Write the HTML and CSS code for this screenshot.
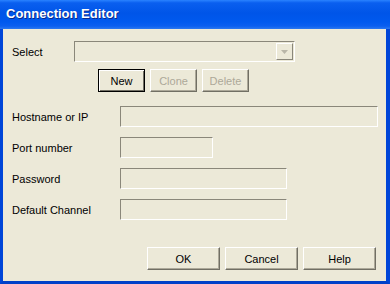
FILE: index.html
```html
<!DOCTYPE html>
<html lang="en">
<head>
  <meta charset="UTF-8" />
  <title>Connection Editor</title>
  <link rel="stylesheet" href="styles.css">
</head>
<body>
  <div class="window">
    <div class="titlebar">Connection Editor</div>
    <div class="content">
      <div class="select-row">
        <span class="select-label">Select</span>
        <div class="combo">
          <span class="combo-btn">
            <svg width="7" height="4" viewBox="0 0 7 4"><path d="M0 0h7L3.5 4z" fill="#b9b6a8"/></svg>
          </span>
        </div>
      </div>
      <div class="actions">
        <button class="btn btn-default">New</button>
        <button class="btn" disabled>Clone</button>
        <button class="btn" disabled>Delete</button>
      </div>

      <div class="field">
        <label>Hostname or IP</label>
        <div class="box w-host"></div>
      </div>
      <div class="field">
        <label>Port number</label>
        <div class="box w-port"></div>
      </div>
      <div class="field">
        <label>Password</label>
        <div class="box w-mid"></div>
      </div>
      <div class="field">
        <label>Default Channel</label>
        <div class="box w-mid"></div>
      </div>

      <div class="footer">
        <button class="btn btn-wide">OK</button>
        <button class="btn btn-wide">Cancel</button>
        <button class="btn btn-wide">Help</button>
      </div>
    </div>
  </div>
</body>
</html>
```

FILE: styles.css
```css
html, body { margin: 0; padding: 0; }
body {
  font-family: "Liberation Sans", Arial, sans-serif;
  font-size: 11px;
  color: #000;
  background: #0054e3;
}
.window {
  width: 390px;
  height: 284px;
  display: flex;
  flex-direction: column;
}
.titlebar {
  height: 29px;
  box-sizing: border-box;
  padding: 6px 0 0 6px;
  color: #fff;
  font-weight: bold;
  font-size: 13px;
  background: linear-gradient(#2a83ff 0, #0a5fef 10%, #0055e8 45%, #0059ee 75%, #0a5ff0 90%, #2b78f0 100%);
  text-shadow: 1px 1px 0 #0a2a8a;
}
.content {
  flex: 1;
  background: #ece9d8;
  border-left: 3px solid #0045d8;
  border-right: 4px solid #0045d8;
  border-bottom: 3px solid #0040c8;
  padding: 12px 0 0 9px;
}
.select-row {
  display: flex;
  align-items: center;
  height: 21px;
}
.select-label { width: 62px; }
.combo {
  width: 221px;
  height: 21px;
  box-sizing: border-box;
  border-top: 1px solid #8a877a;
  border-left: 1px solid #8a877a;
  border-right: 1px solid #fff;
  border-bottom: 1px solid #fff;
  display: flex;
  justify-content: flex-end;
  padding: 1px;
}
.combo-btn {
  width: 17px;
  box-sizing: border-box;
  border-top: 1px solid #fff;
  border-left: 1px solid #fff;
  border-right: 1px solid #8a877a;
  border-bottom: 1px solid #8a877a;
  display: flex;
  align-items: center;
  justify-content: center;
}
.actions {
  display: flex;
  gap: 5px;
  margin: 7px 0 0 86px;
}
.btn {
  font-family: "Liberation Sans", Arial, sans-serif;
  font-size: 11px;
  height: 23px;
  width: 47px;
  padding: 0;
  margin: 0;
  background: #ece9d8;
  color: #000;
  border-top: 1px solid #fff;
  border-left: 1px solid #fff;
  border-right: 1px solid #716f64;
  border-bottom: 1px solid #716f64;
  box-shadow: inset -1px -1px 0 #aca899;
}
.btn:disabled { color: #aca899; }
.btn-default {
  border: 1px solid #000;
  box-shadow: inset 1px 1px 0 #fff, inset -1px -1px 0 #716f64;
}
.field {
  display: flex;
  align-items: center;
  margin-top: 10px;
  height: 21px;
}
.actions + .field { margin-top: 14px; }
.field label { width: 108px; }
.box {
  height: 21px;
  box-sizing: border-box;
  border-top: 1px solid #8a877a;
  border-left: 1px solid #8a877a;
  border-right: 1px solid #fff;
  border-bottom: 1px solid #fff;
}
.w-host { width: 258px; }
.w-port { width: 93px; }
.w-mid { width: 167px; }
.footer {
  display: flex;
  gap: 5px;
  margin: 27px 0 0 135px;
}
.btn-wide { width: 73px; }
```
